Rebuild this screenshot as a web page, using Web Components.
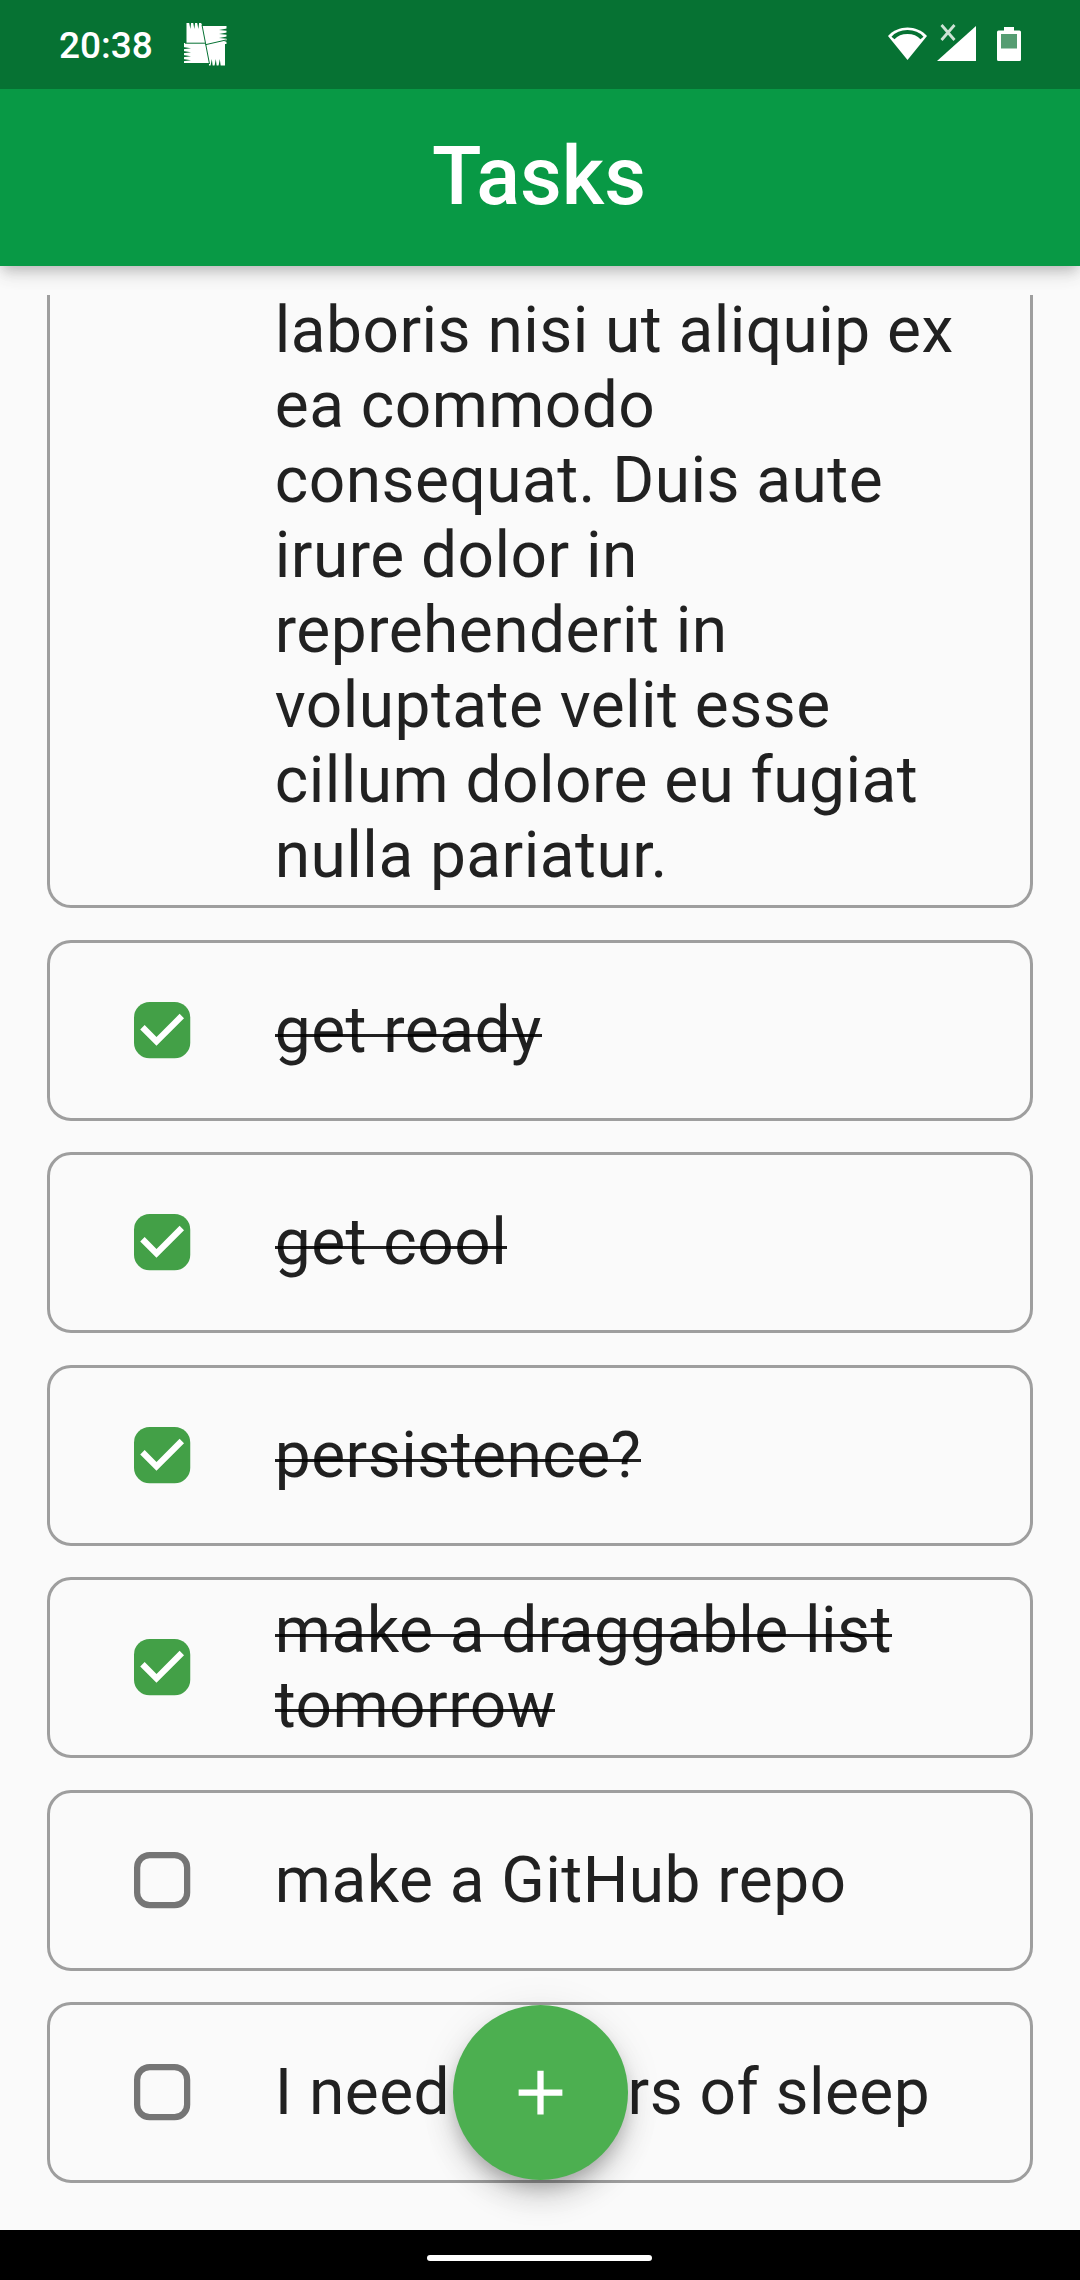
<!DOCTYPE html>
<html lang="en">
<head>
<meta charset="utf-8">
<title>Tasks</title>
<style>
html,body{margin:0;padding:0;background:#fafafa}
body{width:1080px;height:2280px;overflow:hidden;font-family:Roboto,"Liberation Sans",sans-serif}
</style>
</head>
<body>
<tasks-app></tasks-app>
<script>
const define = (name, html) => customElements.define(name, class extends HTMLElement {
  constructor() {
    super();
    this.attachShadow({ mode: "open" }).innerHTML = html;
  }
});

define("status-bar", `
<style>
:host{display:flex;height:89px;flex:none;box-sizing:border-box;background:#067233;color:#fff;align-items:flex-start;position:relative;z-index:2}
.time{font-size:37px;font-weight:500;line-height:44px;margin:24px 0 0 59px;width:92px;white-space:nowrap}
.badge{margin:22px 0 0 32px}
.right{margin-left:auto;margin-right:58px}
svg{display:block;flex:none}
</style>
<span class="time">20:38</span>
<svg class="badge" width="46" height="46" viewBox="0 0 46 46">
  <path d="M3.500 1H19v3H43.500V22H42V43.500H26V41H1V21H3.500z" fill="#fff"/>
  <g fill="#067233">
    <path d="M6 0h2.200L7.400 7zM10 0h2.200L11.400 7zM14 0h2.200L15.400 7zM18 0h1.500L18.700 3z"/>
    <path d="M44 6.500v2.200L36 7.900zM44 10.500v2.200L36 11.900zM44 14.500v2.200L36 15.900zM44 18.200v1.800L41 19z"/>
    <path d="M0 25v2.200L8 26.200zM0 29v2.200L8 30.200zM0 33v2.200L8 34.200zM0 37v2.200L8 38.200z"/>
    <path d="M27.500 44h2.200L28.800 37zM31.500 44h2.200L32.800 37zM35.500 44h2.200L36.800 37z"/>
  </g>
  <path d="M19 3L26.500 42M2 21.200H22M22.500 22.700L43 18" stroke="#067233" stroke-width="1" fill="none"/>
</svg>
<svg class="right" width="136" height="89" viewBox="0 0 136 89">
  <path d="M2 36C12 24.500 31 24.500 41 36L21.500 60z" fill="#fff"/>
  <path d="M7 38C14 30 29 30 36 38" fill="none" stroke="#067233" stroke-width="4"/>
  <path d="M51 61H90V26z" fill="#fff"/>
  <path d="M55.500 25L68.500 40M68.500 25L55.500 40" stroke="#cde3d5" stroke-width="2.800"/>
  <path d="M118 27h10v3.500h5.500q1.500 0 1.500 1.500v27.500q0 1.500-1.500 1.500h-21q-1.500 0-1.500-1.500V32q0-1.500 1.500-1.500h5.500z" fill="#fff"/>
  <path d="M115 34h16v14.500h-16z" fill="#559d72"/>
</svg>`);

define("app-header", `
<style>
:host{display:flex;height:177px;flex:none;align-items:center;justify-content:center;box-sizing:border-box;padding:0 2px 1px 0;background:#089945;color:#fff;font-size:81.250px;font-weight:500;line-height:96px;box-shadow:0 6px 12px -3px rgba(0,0,0,.2),0 12px 15px rgba(0,0,0,.06),0 3px 26px rgba(0,0,0,.06);position:relative}
</style><slot></slot>`);

define("check-box", `
<style>
:host{display:block;width:56.250px;height:56.250px;flex:none}
svg{display:block;overflow:visible}
.on,:host([checked]) .off{display:none}
:host([checked]) .on{display:block}
</style>
<svg width="56.250" height="56.250" viewBox="0 0 18 18" fill="none">
  <rect class="off" x="1" y="1" width="16" height="16" rx="4" stroke="#757575" stroke-width="2"/>
  <g class="on"><rect width="18" height="18" rx="5" fill="#43a047"/><path d="M2.700 8.100L7.200 12.600L15.300 4.500" stroke="#fff" stroke-width="2"/></g>
</svg>`);

customElements.define("task-item", class extends HTMLElement {
  constructor() {
    super();
    this.attachShadow({ mode: "open" }).innerHTML = `
<style>
:host{display:flex;box-sizing:border-box;height:180.750px;flex:none;align-items:center;border:3px solid #9e9e9e;border-radius:24px;padding-left:84.500px;gap:84.200px;color:rgba(0,0,0,.87);font-size:64px;line-height:75px;letter-spacing:.45px}
:host([tall]){height:613.150px;align-items:flex-end;padding-bottom:12px;border-top:0;border-radius:0 0 24px 24px}
:host([tall]) check-box{visibility:hidden}
check-box{margin-bottom:.8px}
/* The strike sits lower than the native line-through does */
:host([done]) .ink{background:linear-gradient(transparent 41px,rgba(0,0,0,.87) 41px,rgba(0,0,0,.87) 44.300px,transparent 44.300px);-webkit-box-decoration-break:clone;box-decoration-break:clone}
.text{display:block;white-space:nowrap}
</style>
<check-box></check-box><div class="text"><span class="ink"><slot></slot></span></div>`;
  }
  connectedCallback() {
    this.shadowRoot.querySelector("check-box").toggleAttribute("checked", this.hasAttribute("done"));
  }
});

define("task-list", `
<style>
:host{display:flex;flex-direction:column;justify-content:flex-end;gap:31.750px;box-sizing:border-box;margin-top:29px;height:1935px;padding:0 46.900px 46.850px}
</style><slot></slot>`);

define("add-button", `
<style>
:host{position:absolute;left:452.500px;top:2004.500px;width:175px;height:175px;border-radius:50%;background:#4caf50;display:flex;align-items:center;justify-content:center;box-shadow:0 10px 16px -3px rgba(0,0,0,.2),0 19px 31px rgba(0,0,0,.14),0 3px 40px rgba(0,0,0,.08)}
</style>
<svg width="75" height="75" viewBox="0 0 24 24" fill="#fff"><path d="M19 13h-6v6h-2v-6H5v-2h6V5h2v6h6v2z"/></svg>`);

define("nav-bar", `
<style>
:host{display:flex;height:50px;flex:none;background:#000;align-items:center;justify-content:center;box-sizing:border-box;padding:6px 1px 0 0}
i{width:225px;height:6px;border-radius:3px;background:#fff}
</style><i></i>`);

define("tasks-app", `
<style>
:host{display:flex;flex-direction:column;position:relative;width:1080px;height:2280px;background:#fafafa;overflow:hidden}
</style>
<status-bar></status-bar>
<app-header>Tasks</app-header>
<task-list>
  <task-item tall>laboris nisi ut aliquip ex<br>ea commodo<br>consequat. Duis aute<br>irure dolor in<br>reprehenderit in<br>voluptate velit esse<br>cillum dolore eu fugiat<br>nulla pariatur.</task-item>
  <task-item done>get ready</task-item>
  <task-item done>get cool</task-item>
  <task-item done>persistence?</task-item>
  <task-item done>make a draggable list<br>tomorrow</task-item>
  <task-item>make a GitHub repo</task-item>
  <task-item>I need 8 hours of sleep</task-item>
</task-list>
<nav-bar></nav-bar>
<add-button></add-button>`);
</script>
</body>
</html>
